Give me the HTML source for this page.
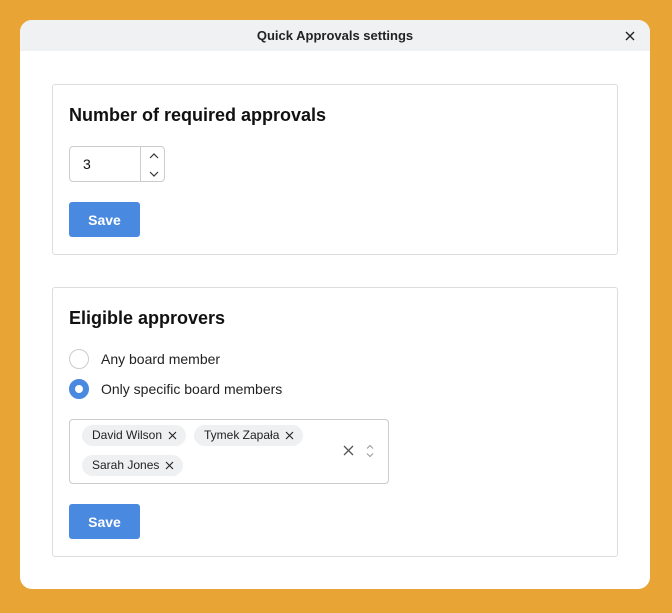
<!DOCTYPE html>
<html><head><style>
*{box-sizing:border-box;margin:0;padding:0}
body{width:672px;height:613px;background:#E8A535;font-family:"Liberation Sans",sans-serif;position:relative;overflow:hidden;color:#111}
.modal{position:absolute;left:20px;top:20px;width:630px;height:569px;background:#fff;border-radius:12px;overflow:hidden}
.hdr{height:31px;background:#f0f1f3;text-align:center;font-size:13px;font-weight:bold;line-height:32px;color:#222;font-family:"Liberation Sans",sans-serif}
.close{position:absolute;right:15px;top:11px}
.card{position:absolute;left:32px;width:566px;border:1px solid #dcdde0;border-radius:3px}
h2{position:absolute;left:16px;font-size:18px;font-weight:bold;color:#111}
.btn{position:absolute;left:16px;width:71px;height:35px;background:#4a89e0;color:#fff;border-radius:3px;font-weight:bold;font-size:14px;text-align:center;line-height:36px}
.num{position:absolute;left:16px;top:61px;width:96px;height:36px;border:1px solid #ccc;border-radius:4px}
.num span{position:absolute;left:13px;top:9px;font-size:14px}
.num .d{position:absolute;left:70px;top:0;bottom:0;border-left:1px solid #ccc}
.radio{position:absolute;left:16px;width:20px;height:20px;border-radius:50%}
.lbl{position:absolute;left:48px;font-size:14px;color:#222}
.sel{position:absolute;left:16px;top:131px;width:320px;height:65px;border:1px solid #ccc;border-radius:4px}
.chip{position:absolute;height:21px;background:#eef0f2;border-radius:11px;font-size:12px;line-height:21px;padding-left:10px;color:#222}
.chip svg{position:absolute;right:9px;top:6px}
</style></head><body>
<div class="modal">
<div class="hdr">Quick Approvals settings</div>
<svg class="close" width="10" height="10" viewBox="0 0 10 10"><path d="M1 1L9 9M9 1L1 9" stroke="#222" stroke-width="1.4"/></svg>
<div class="card" style="top:64px;height:171px">
<h2 style="top:20px">Number of required approvals</h2>
<div class="num"><span>3</span><div class="d"></div>
<svg style="position:absolute;left:78px;top:4px" width="12" height="28" viewBox="0 0 12 28"><path d="M2 7L6 3L10 7M2 21L6 25L10 21" fill="none" stroke="#333" stroke-width="1.2"/></svg></div>
<div class="btn" style="top:117px">Save</div>
</div>
<div class="card" style="top:267px;height:270px">
<h2 style="top:20px">Eligible approvers</h2>
<div class="radio" style="top:61px;border:1px solid #ccc"></div>
<div class="lbl" style="top:63px">Any board member</div>
<div class="radio" style="top:91px;background:#fff;border:6px solid #4a89e0"></div>
<div class="lbl" style="top:93px">Only specific board members</div>
<div class="sel">
<div class="chip" style="left:12px;top:5px;width:104px">David Wilson<svg width="9" height="9" viewBox="0 0 9 9"><path d="M1 1L8 8M8 1L1 8" stroke="#222" stroke-width="1.1"/></svg></div>
<div class="chip" style="left:124px;top:5px;width:109px">Tymek Zapała<svg width="9" height="9" viewBox="0 0 9 9"><path d="M1 1L8 8M8 1L1 8" stroke="#222" stroke-width="1.1"/></svg></div>
<div class="chip" style="left:12px;top:35px;width:101px">Sarah Jones<svg width="9" height="9" viewBox="0 0 9 9"><path d="M1 1L8 8M8 1L1 8" stroke="#222" stroke-width="1.1"/></svg></div>
<svg style="position:absolute;left:273px;top:25px" width="11" height="11" viewBox="0 0 11 11"><path d="M1 1L10 10M10 1L1 10" stroke="#555" stroke-width="1.3"/></svg>
<svg style="position:absolute;left:296px;top:24px" width="8" height="14" viewBox="0 0 8 14"><path d="M1 4.5L4 1.5L7 4.5M1 9.5L4 12.5L7 9.5" fill="none" stroke="#999" stroke-width="1"/></svg>
</div>
<div class="btn" style="top:216px">Save</div>
</div>
</div>
</body></html>
